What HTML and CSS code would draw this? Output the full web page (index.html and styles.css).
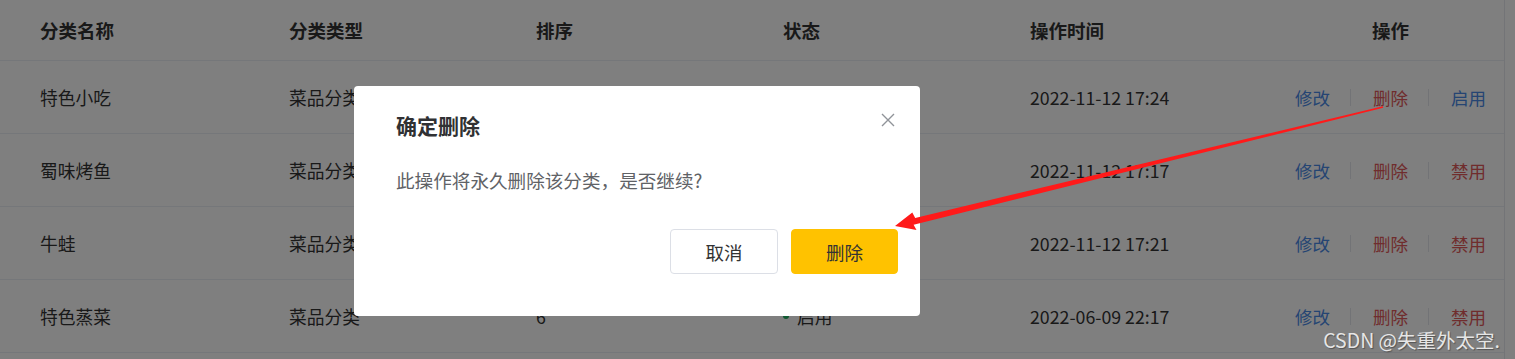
FILE: index.html
```html
<!DOCTYPE html>
<html lang="zh-CN">
<head>
<meta charset="utf-8">
<title>分类管理</title>
<link rel="stylesheet" href="styles.css">
</head>
<body>
<div class="page">
  <div class="table">
    <div class="row head">
      <div class="cell">分类名称</div>
      <div class="cell">分类类型</div>
      <div class="cell">排序</div>
      <div class="cell">状态</div>
      <div class="cell">操作时间</div>
      <div class="cell ops-head">操作</div>
    </div>
    <div class="row">
      <div class="cell">特色小吃</div>
      <div class="cell">菜品分类</div>
      <div class="cell">1</div>
      <div class="cell"><span class="dot off"></span>禁用</div>
      <div class="cell">2022-11-12 17:24</div>
      <div class="cell ops"><span class="link blue">修改</span><span class="sep"></span><span class="link red">删除</span><span class="sep"></span><span class="link blue">启用</span></div>
    </div>
    <div class="row">
      <div class="cell">蜀味烤鱼</div>
      <div class="cell">菜品分类</div>
      <div class="cell">2</div>
      <div class="cell"><span class="dot"></span>启用</div>
      <div class="cell">2022-11-12 17:17</div>
      <div class="cell ops"><span class="link blue">修改</span><span class="sep"></span><span class="link red">删除</span><span class="sep"></span><span class="link red">禁用</span></div>
    </div>
    <div class="row">
      <div class="cell">牛蛙</div>
      <div class="cell">菜品分类</div>
      <div class="cell">3</div>
      <div class="cell"><span class="dot"></span>启用</div>
      <div class="cell">2022-11-12 17:21</div>
      <div class="cell ops"><span class="link blue">修改</span><span class="sep"></span><span class="link red">删除</span><span class="sep"></span><span class="link red">禁用</span></div>
    </div>
    <div class="row">
      <div class="cell">特色蒸菜</div>
      <div class="cell">菜品分类</div>
      <div class="cell">6</div>
      <div class="cell"><span class="dot"></span>启用</div>
      <div class="cell">2022-06-09 22:17</div>
      <div class="cell ops"><span class="link blue">修改</span><span class="sep"></span><span class="link red">删除</span><span class="sep"></span><span class="link red">禁用</span></div>
    </div>
    <div class="row empty"></div>
  </div>

  <div class="mask"></div>

  <div class="dialog">
    <div class="dlg-head">
      <span class="dlg-title">确定删除</span>
      <span class="dlg-close">
        <svg viewBox="0 0 14 14" width="14" height="14"><path d="M1 1 L13 13 M13 1 L1 13" stroke="#909399" stroke-width="1.4" fill="none"/></svg>
      </span>
    </div>
    <div class="dlg-body">此操作将永久删除该分类，是否继续?</div>
    <div class="dlg-foot">
      <button class="btn">取消</button>
      <button class="btn primary">删除</button>
    </div>
  </div>

  <svg class="arrow" viewBox="0 0 1515 359" width="1515" height="359">
    <polygon fill="#ff1a1a" points="1383.2,107.7 1382.8,106.3 915.2,217.9 912.3,212.6 895,226 916.5,230 913.6,224.7"/>
  </svg>

  <div class="watermark">CSDN @失重外太空.</div>
</div>
</body>
</html>
```

FILE: styles.css
```css
html, body {
  margin: 0;
  padding: 0;
  background: #ffffff;
}

body {
  font-family: "Noto Sans CJK SC", "Microsoft YaHei", "Noto Sans", sans-serif;
  color: #333333;
}

.page {
  position: relative;
  width: 1515px;
  height: 359px;
  overflow: hidden;
  background: #ffffff;
}

.table {
  width: 1505px;
  border-right: 1px solid #e6e8ee;
  box-sizing: border-box;
}

.row {
  display: grid;
  grid-template-columns: 249px 247px 247px 247px 247px 1fr;
  padding-left: 40px;
  height: 72px;
  align-items: center;
  border-bottom: 1px solid #ebeef5;
  font-size: 17.75px;
  color: #333333;
}

.row.head {
  height: 60px;
  font-size: 18.5px;
  font-weight: 700;
  color: #333333;
}

.row.empty {
  border-bottom: none;
}

.cell {
  white-space: nowrap;
  display: flex;
  align-items: center;
}

.ops-head {
  justify-content: center;
}

.ops {
  justify-content: center;
  font-size: 17.5px;
}

.link {
  display: inline-block;
}

.link.blue { color: #4a8ae6; }
.link.red { color: #e05a5a; }

.sep {
  display: inline-block;
  width: 1px;
  height: 17px;
  background: #e4e7ed;
  margin: 0 22px 0 20px;
}

.dot {
  display: inline-block;
  width: 6px;
  height: 6px;
  border-radius: 50%;
  background: #22b566;
  margin-right: 8px;
}

.dot.off {
  background: #b0b3b8;
}

.mask {
  position: absolute;
  inset: 0;
  background: rgba(0, 0, 0, 0.5);
}

.dialog {
  position: absolute;
  left: 354px;
  top: 86px;
  width: 566px;
  height: 230px;
  box-sizing: border-box;
  background: #ffffff;
  border-radius: 4px;
  display: flex;
  flex-direction: column;
  padding-bottom: 42px;
}

.dlg-head {
  position: relative;
  padding: 25px 42px 0 42px;
}

.dlg-title {
  display: block;
  font-size: 21px;
  line-height: 28px;
  font-weight: 700;
  color: #303133;
}

.dlg-close {
  position: absolute;
  top: 27px;
  right: 25px;
  width: 14px;
  height: 14px;
  display: flex;
}

.dlg-body {
  padding: 0 42px;
  margin-top: 27px;
  font-size: 18.6px;
  line-height: 28px;
  color: #606266;
}

.dlg-foot {
  margin-top: auto;
  display: flex;
  justify-content: flex-end;
  gap: 13px;
  padding-right: 22px;
}

.btn {
  font-family: inherit;
  font-size: 18.5px;
  width: 108px;
  height: 45px;
  border: 1px solid #dcdfe6;
  border-radius: 4px;
  background: #ffffff;
  color: #333333;
  padding: 0;
  margin: 0;
}

.btn.primary {
  width: 107px;
  background: #ffc200;
  border-color: #ffc200;
  color: #333333;
}

.arrow {
  position: absolute;
  left: 0;
  top: 0;
}

.watermark {
  position: absolute;
  right: 15px;
  bottom: 8px;
  font-family: "Noto Sans CJK SC", "Noto Sans", sans-serif;
  font-size: 19.5px;
  line-height: 22px;
  color: #e6e6e6;
  text-shadow: 1px 1px 1px rgba(0, 0, 0, 0.35);
}
```
